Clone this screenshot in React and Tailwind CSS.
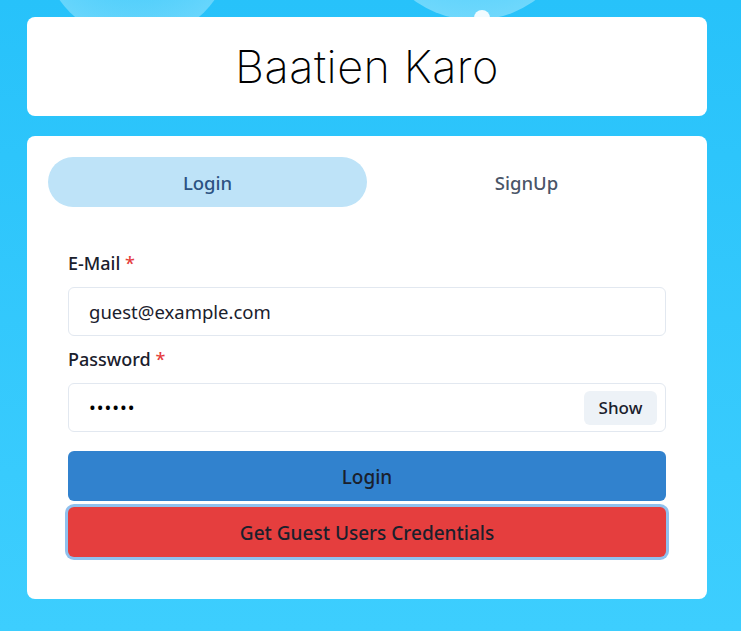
import React from 'react';

const body = { fontFamily: '"Noto Sans", "Open Sans", sans-serif' };

export default function App() {
    return (
        <div className="relative min-h-[631px] w-full overflow-hidden bg-gradient-to-b from-[#27c2fa] to-[#3dcefe]" style={body}>
            {/* bubbles behind the header */}
            <div className="absolute left-[42px] top-[-150px] h-[190px] w-[190px] rounded-full bg-[radial-gradient(circle_at_50%_40%,rgba(255,255,255,0.05),rgba(190,240,255,0.55))]"></div>
            <div className="absolute left-[372px] top-[-185px] h-[205px] w-[205px] rounded-full bg-[radial-gradient(circle_at_50%_40%,rgba(255,255,255,0.05),rgba(190,240,255,0.6))]"></div>
            <div className="absolute left-[474px] top-[10px] h-[16px] w-[16px] rounded-full bg-white/90"></div>

            <div className="relative ml-[27px] flex w-[680px] flex-col gap-5 pt-[17px]">
                <div className="flex h-[99px] items-center justify-center rounded-lg bg-white">
                    <h1 className="text-[45px] font-extralight tracking-[0.5px] text-black" style={{ fontFamily: 'Inter, "Noto Sans", sans-serif' }}>
                        Baatien Karo
                    </h1>
                </div>

                <div className="rounded-lg bg-white px-[21px] pb-[42px] pt-[21px]">
                    <div className="flex">
                        <button className="h-[50px] flex-1 rounded-full bg-[#bee3f8] pt-[2px] text-[18.5px] font-medium text-[#2c5282]">Login</button>
                        <button className="h-[50px] flex-1 rounded-full pt-[2px] text-[18.5px] font-medium text-[#4a5568]">SignUp</button>
                    </div>

                    <div className="px-5 pt-[44px]">
                        <label className="mb-3 block text-[18px] font-medium leading-6 text-[#1a202c]">
                            E-Mail <span className="text-[#e53e3e]">*</span>
                        </label>
                        <div className="flex h-[49px] items-center rounded-md border border-[#e2e8f0] pl-5 text-[18.5px] text-[#1a202c]">
                            guest@example.com
                        </div>

                        <label className="mb-3 mt-[11px] block text-[18px] font-medium leading-6 text-[#1a202c]">
                            Password <span className="text-[#e53e3e]">*</span>
                        </label>
                        <div className="flex h-[49px] items-center justify-between rounded-md border border-[#e2e8f0] pl-5 pr-2">
                            <span className="text-[18px] tracking-[1px] text-black">••••••</span>
                            <button className="h-[34px] w-[73px] rounded-md bg-[#edf2f7] text-[17px] font-medium text-[#1a202c]">Show</button>
                        </div>

                        <button className="mt-[19px] block h-[50px] w-full rounded-md bg-[#3182ce] pt-[3px] text-[19px] font-medium text-[#1a202c]">Login</button>
                        <button className="mt-[6px] block h-[50px] w-full rounded-md bg-[#e53e3e] pt-[3px] text-[19px] font-medium text-[#1a202c] ring-[3px] ring-[#90c1ee]">
                            Get Guest Users Credentials
                        </button>
                    </div>
                </div>
            </div>
        </div>
    );
}
